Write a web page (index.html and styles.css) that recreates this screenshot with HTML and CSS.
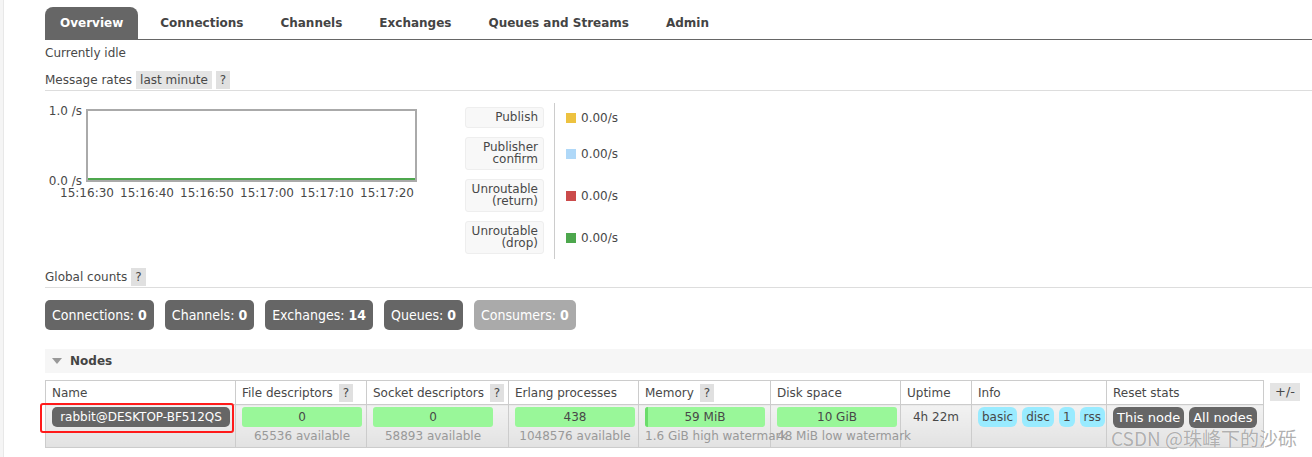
FILE: index.html
```html
<!DOCTYPE html>
<html lang="en">
<head>
<meta charset="utf-8">
<title>RabbitMQ Management</title>
<link rel="stylesheet" href="styles.css">
</head>
<body>
<div class="page">
  <ul class="tabs">
    <li class="tab active">Overview</li>
    <li class="tab">Connections</li>
    <li class="tab">Channels</li>
    <li class="tab">Exchanges</li>
    <li class="tab">Queues and Streams</li>
    <li class="tab">Admin</li>
  </ul>

  <p class="status">Currently idle</p>

  <div class="section-head">
    <span>Message rates</span>
    <span class="pill">last minute</span>
    <span class="help">?</span>
  </div>

  <div class="rates">
    <div class="chart">
      <div class="plot">
        <span class="ylab ytop">1.0 /s</span>
        <span class="ylab ybottom">0.0 /s</span>
        <div class="series"></div>
        <span class="xlab x0">15:16:30</span>
        <span class="xlab x1">15:16:40</span>
        <span class="xlab x2">15:16:50</span>
        <span class="xlab x3">15:17:00</span>
        <span class="xlab x4">15:17:10</span>
        <span class="xlab x5">15:17:20</span>
      </div>
    </div>
    <table class="legend">
      <tr>
        <td class="lbl"><div class="lbox">Publish</div></td>
        <td class="val"><span class="sq c-pub"></span>0.00/s</td>
      </tr>
      <tr>
        <td class="lbl"><div class="lbox">Publisher<br>confirm</div></td>
        <td class="val"><span class="sq c-conf"></span>0.00/s</td>
      </tr>
      <tr>
        <td class="lbl"><div class="lbox">Unroutable<br>(return)</div></td>
        <td class="val"><span class="sq c-ret"></span>0.00/s</td>
      </tr>
      <tr>
        <td class="lbl"><div class="lbox">Unroutable<br>(drop)</div></td>
        <td class="val"><span class="sq c-drop"></span>0.00/s</td>
      </tr>
    </table>
  </div>

  <div class="section-head gc">
    <span>Global counts</span>
    <span class="help">?</span>
  </div>

  <div class="counts">
    <span class="count">Connections: <b>0</b></span>
    <span class="count">Channels: <b>0</b></span>
    <span class="count">Exchanges: <b>14</b></span>
    <span class="count">Queues: <b>0</b></span>
    <span class="count dim">Consumers: <b>0</b></span>
  </div>

  <div class="nodes-head"><span class="tri"></span>Nodes</div>

  <div class="nodes">
    <table class="ntable">
      <colgroup>
        <col class="w-name"><col class="w-fd"><col class="w-sd"><col class="w-ep"><col class="w-mem"><col class="w-disk"><col class="w-up"><col class="w-info"><col class="w-reset">
      </colgroup>
      <thead>
        <tr>
          <th>Name</th>
          <th>File descriptors <span class="help">?</span></th>
          <th>Socket descriptors <span class="help">?</span></th>
          <th>Erlang processes</th>
          <th>Memory <span class="help">?</span></th>
          <th>Disk space</th>
          <th>Uptime</th>
          <th>Info</th>
          <th>Reset stats</th>
        </tr>
      </thead>
      <tbody>
        <tr>
          <td class="namecell"><span class="nodebtn">rabbit@DESKTOP-BF512QS</span><span class="mark"></span></td>
          <td><div class="bar">0</div><div class="sub">65536 available</div></td>
          <td><div class="bar">0</div><div class="sub">58893 available</div></td>
          <td><div class="bar">438</div><div class="sub">1048576 available</div></td>
          <td><div class="bar memb"><span class="used"></span>59 MiB</div><div class="sub">1.6 GiB high watermark</div></td>
          <td><div class="bar">10 GiB</div><div class="sub">48 MiB low watermark</div></td>
          <td class="up">4h 22m</td>
          <td><span class="badge">basic</span><span class="badge">disc</span><span class="badge">1</span><span class="badge">rss</span></td>
          <td><span class="rbtn">This node</span><span class="rbtn">All nodes</span></td>
        </tr>
      </tbody>
    </table>
    <span class="plusminus">+/-</span>
  </div>
</div>
<div class="watermark">CSDN @珠峰下的沙砾</div>
</body>
</html>
```

FILE: styles.css
```css
html, body {
  margin: 0;
  padding: 0;
}
body {
  font-family: "DejaVu Sans", Verdana, sans-serif;
  font-size: 12px;
  color: #484848;
  background: linear-gradient(90deg, #f5f5f5 3px, #ffffff 3px);
  position: relative;
  height: 457px;
  overflow: hidden;
}
.page {
  margin-left: 3px;
  border-left: 1px solid #e8e8e8;
  padding-left: 41px;
  height: 457px;
  background: #fff;
}

/* tabs */
.tabs {
  list-style: none;
  margin: 0;
  padding: 7px 0 0;
  display: flex;
  border-bottom: 1px solid #666;
}
.tab {
  height: 32px;
  line-height: 33px;
  padding: 0 15px;
  margin-right: 7px;
  font-weight: bold;
  color: #444;
}
.tab.active {
  background: #666;
  color: #fff;
  border-radius: 8px 8px 0 0;
}

.status {
  margin: 6px 0 0;
  line-height: 15px;
}

/* section headings */
.section-head {
  margin-top: 10px;
  height: 19px;
  display: flex;
  align-items: flex-start;
  gap: 4px;
  line-height: 18px;
  border-bottom: 1px solid #ddd;
}
.section-head.gc {
  margin-top: 9px;
}
.pill {
  background: #e4e4e4;
  padding: 0 4px;
  height: 18px;
}
.help {
  display: inline-block;
  background: #e0e0e0;
  padding: 0 4px;
  height: 18px;
  line-height: 18px;
}

/* rates */
.rates {
  display: flex;
  align-items: flex-start;
  margin-top: 12px;
}
.chart {
  width: 372px;
  padding-top: 6px;
}
.plot {
  position: relative;
  margin-left: 41px;
  width: 331px;
  height: 73px;
  box-sizing: border-box;
  border: 2px solid #aaa;
  margin-bottom: 20px;
}
.series {
  position: absolute;
  left: 0;
  right: 0;
  bottom: 0;
  height: 2px;
  background: #4da74d;
}
.ylab {
  position: absolute;
  right: calc(100% + 6px);
  line-height: 14px;
  white-space: nowrap;
}
.ytop { top: -7px; }
.ybottom { bottom: -8px; }
.xlab {
  position: absolute;
  top: 75px;
  line-height: 14px;
  transform: translateX(-50%);
  white-space: nowrap;
}
.x0 { left: -1px; }
.x1 { left: 59px; }
.x2 { left: 119px; }
.x3 { left: 179px; }
.x4 { left: 239px; }
.x5 { left: 299px; }

.legend {
  margin-left: 48px;
  border-collapse: separate;
  border-spacing: 0;
}
.legend td {
  padding: 4px 0 5px;
}
.legend .lbl {
  padding-right: 10px;
  border-right: 1px solid #ccc;
}
.lbox {
  width: 79px;
  box-sizing: border-box;
  background: #f8f8f8;
  border: 1px solid #eee;
  border-radius: 3px;
  padding: 3px 5px 4px;
  text-align: right;
  line-height: 12px;
}
.legend .val {
  padding-left: 11px;
  white-space: nowrap;
}
.sq {
  display: inline-block;
  width: 10px;
  height: 10px;
  margin-right: 5px;
  vertical-align: -1px;
}
.c-pub { background: #edc240; }
.c-conf { background: #afd8f8; }
.c-ret { background: #cb4b4b; }
.c-drop { background: #4da74d; }

/* global counts */
.counts {
  display: flex;
  gap: 11px;
  margin-top: 12px;
}
.count {
  height: 30px;
  line-height: 30px;
  padding: 0 7px;
  background: #666;
  color: #fff;
  border-radius: 5px;
  font-family: "Liberation Sans Narrow", "DejaVu Sans Condensed", "Liberation Sans", sans-serif;
  font-size: 14px;
  white-space: nowrap;
}
.count.dim {
  background: #aaa;
}

/* nodes */
.nodes-head {
  margin-top: 19px;
  height: 24px;
  background: #f6f6f6;
  display: flex;
  align-items: center;
  padding-left: 7px;
  font-weight: bold;
  color: #444;
}
.tri {
  width: 0;
  height: 0;
  border-left: 5px solid transparent;
  border-right: 5px solid transparent;
  border-top: 6px solid #999;
  margin-right: 8px;
}
.nodes {
  display: flex;
  align-items: flex-start;
  margin-top: 7px;
}
.ntable {
  table-layout: fixed;
  width: 1218px;
  border-collapse: collapse;
  border: 1px solid #ccc;
}
.w-name { width: 190px; }
.w-fd { width: 131px; }
.w-sd { width: 142px; }
.w-ep { width: 130px; }
.w-mem { width: 132px; }
.w-disk { width: 130px; }
.w-up { width: 71px; }
.w-info { width: 135px; }
.w-reset { width: 157px; }
.ntable th {
  height: 23px;
  padding: 0 6px;
  text-align: left;
  font-weight: normal;
  background: #fff;
  border: 1px solid #ccc;
  white-space: nowrap;
}
.ntable th .help {
  margin-left: 2px;
}
.ntable td {
  vertical-align: top;
  padding: 2px 6px 3px;
  height: 37px;
  border: 1px solid #ccc;
  background: linear-gradient(#f2f2f2, #e2e2e2);
  white-space: nowrap;
}
.namecell {
  position: relative;
}
.nodebtn {
  display: block;
  width: 178px;
  box-sizing: border-box;
  height: 20px;
  line-height: 20px;
  background: #666;
  color: #fff;
  border-radius: 5px;
  text-align: center;
}
.mark {
  position: absolute;
  left: -6px;
  top: -2px;
  width: 190px;
  height: 26px;
  border: 2px solid #ff1a1a;
  border-radius: 3px;
}
.bar {
  position: relative;
  width: 120px;
  height: 20px;
  line-height: 20px;
  background: #99f799;
  border-radius: 3px;
  text-align: center;
  overflow: hidden;
}
.memb .used {
  position: absolute;
  left: 0;
  top: 0;
  bottom: 0;
  width: 3px;
  background: #6bdc6b;
}
.sub {
  width: 120px;
  margin-top: 2px;
  line-height: 14px;
  color: #999;
  text-align: center;
  white-space: nowrap;
}
.ntable td.up {
  text-align: center;
  line-height: 20px;
}
.badge {
  display: inline-block;
  height: 20px;
  line-height: 20px;
  padding: 0 4px;
  margin-right: 5px;
  background: #99ebff;
  border-radius: 6px;
  font-size: 12px;
}
.rbtn {
  display: inline-block;
  height: 21px;
  line-height: 21px;
  padding: 0 4px;
  margin-right: 5px;
  background: #666;
  color: #fff;
  border-radius: 6px;
  font-size: 13px;
}
.plusminus {
  margin-left: 6px;
  margin-top: 3px;
  height: 18px;
  line-height: 18px;
  padding: 0 5px;
  background: #e4e4e4;
  font-size: 13px;
}

.watermark {
  position: absolute;
  right: 15px;
  top: 424px;
  font-family: "Noto Sans CJK SC", "DejaVu Sans", sans-serif;
  font-size: 19px;
  color: rgba(110, 110, 110, 0.55);
  text-shadow: 0 0 1px #fff;
  white-space: nowrap;
}
```
